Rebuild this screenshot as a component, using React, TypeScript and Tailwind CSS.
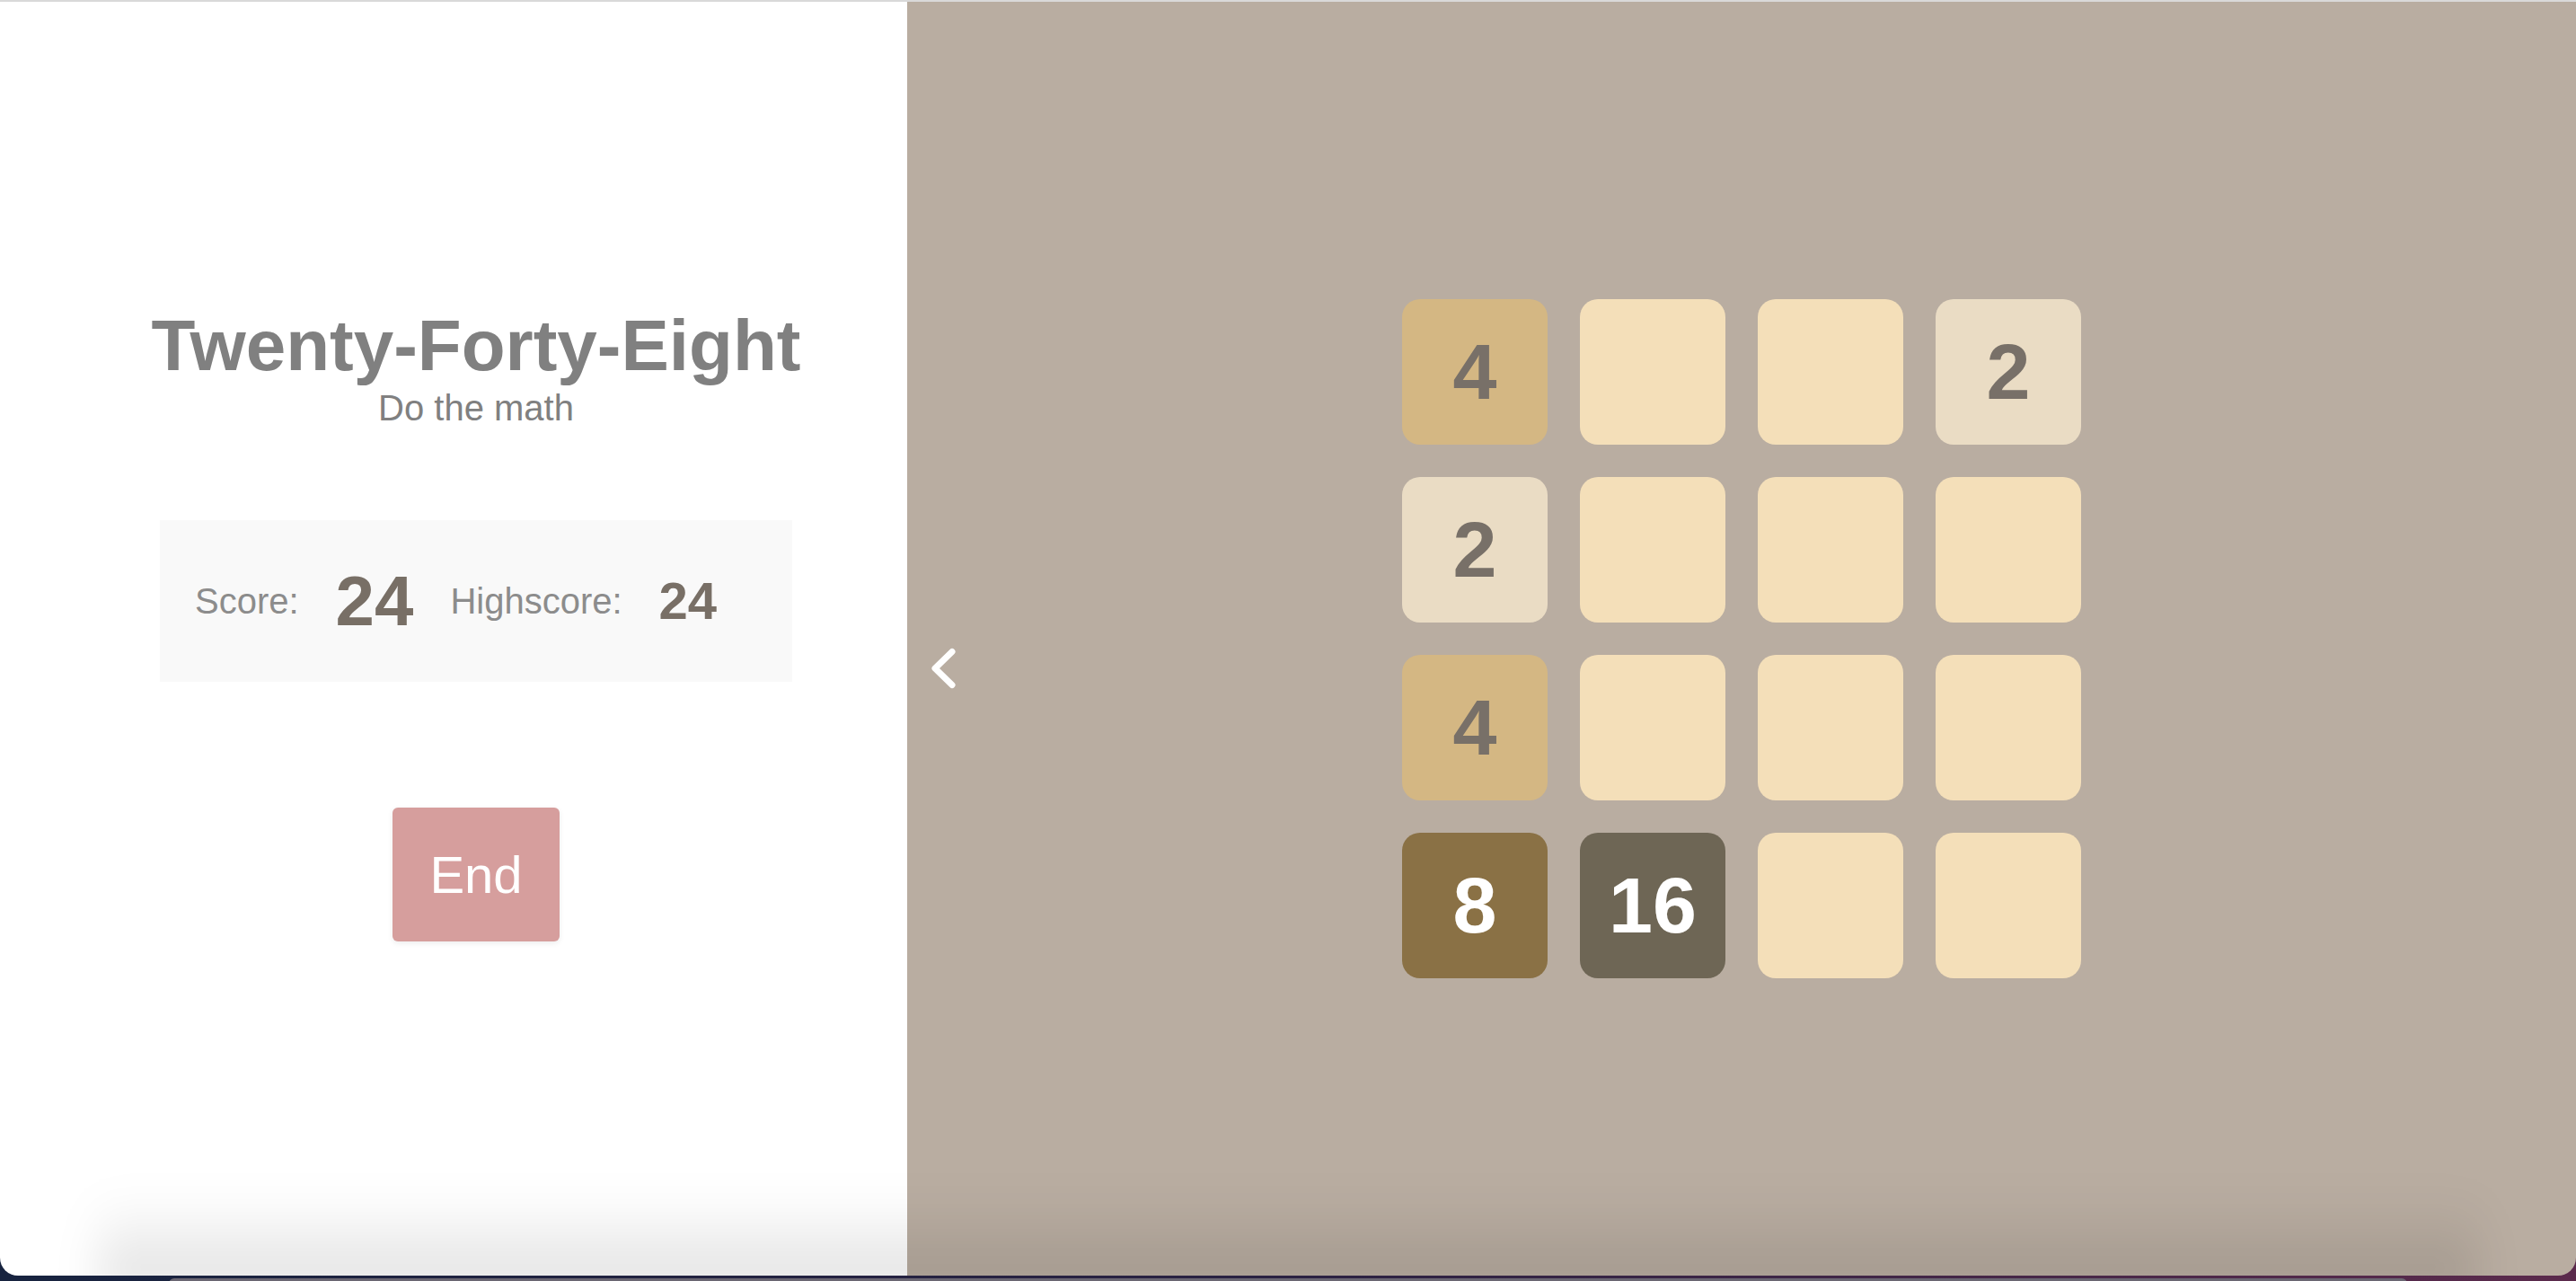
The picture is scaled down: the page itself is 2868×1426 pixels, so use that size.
import React from 'react';

type Tile = number | null;

const board: Tile[][] = [
  [4, null, null, 2],
  [2, null, null, null],
  [4, null, null, null],
  [8, 16, null, null],
];

const tileStyle: Record<string, string> = {
  empty: 'bg-[#f4dfb9]',
  '2': 'bg-[#eadcc4] text-[#787068]',
  '4': 'bg-[#d4b783] text-[#787068]',
  '8': 'bg-[#8a7145] text-white',
  '16': 'bg-[#6e6655] text-white',
};

function Cell({ value }: { value: Tile }) {
  const cls = value === null ? tileStyle.empty : tileStyle[String(value)];
  return (
    <div
      className={`w-[162px] h-[162px] rounded-[20px] flex items-center justify-center text-[88px] leading-none font-bold ${cls}`}
    >
      {value}
    </div>
  );
}

export default function App() {
  return (
    <div className="h-screen w-full overflow-hidden bg-gradient-to-r from-[#17233f] via-[#2a2142] to-[#5b2a4c] font-['Liberation_Sans',Arial,sans-serif]">
      <div className="relative flex h-[1420px] w-full overflow-hidden rounded-b-[20px] border-t-2 border-[#d9d9d9]">
        {/* Sidebar */}
        <aside className="w-[1010px] bg-white pl-[50px] pt-[343px] flex flex-col items-center">
          <h1 className="text-[80px] leading-[80px] font-bold text-[#808080]">Twenty-Forty-Eight</h1>
          <p className="mt-[9px] text-[40px] leading-[40px] text-[#808080]">Do the math</p>

          <div className="mt-[105px] w-[704px] h-[180px] bg-[#f9f9f9] flex items-center pl-[39px] gap-[41px]">
            <span className="text-[40px] leading-none text-[#8c8c8c]">Score:</span>
            <span className="text-[78px] leading-none font-bold text-[#786f66]">24</span>
            <span className="text-[40px] leading-none text-[#8c8c8c]">Highscore:</span>
            <span className="text-[58px] leading-none font-bold text-[#786f66]">24</span>
          </div>

          <button className="mt-[140px] w-[186px] h-[149px] rounded-[6px] bg-[#d69e9d] text-white text-[58px] leading-none shadow-[0_2px_6px_rgba(0,0,0,0.08)]">
            End
          </button>
        </aside>

        {/* Board */}
        <main className="relative flex-1 bg-[#b9ada1] flex items-center justify-center">
          <svg
            className="absolute left-[20px] top-[711px]"
            width="40"
            height="60"
            viewBox="0 0 40 60"
            fill="none"
          >
            <polyline
              points="30,12.5 11,31 30,49.5"
              stroke="white"
              strokeWidth="7"
              strokeLinecap="round"
              strokeLinejoin="round"
            />
          </svg>

          <div className="grid grid-cols-4 gap-[36px]">
            {board.flat().map((v, i) => (
              <Cell key={i} value={v} />
            ))}
          </div>
        </main>

        {/* bottom shade */}
        <div className="pointer-events-none absolute bottom-[-20px] left-[110px] right-[110px] h-[110px] bg-gradient-to-b from-transparent to-black/[0.13] blur-xl" />
      </div>
      <div className="mx-[188px] mt-[3px] h-[6px] rounded-t-[6px] bg-[#6a6672]" />
    </div>
  );
}
